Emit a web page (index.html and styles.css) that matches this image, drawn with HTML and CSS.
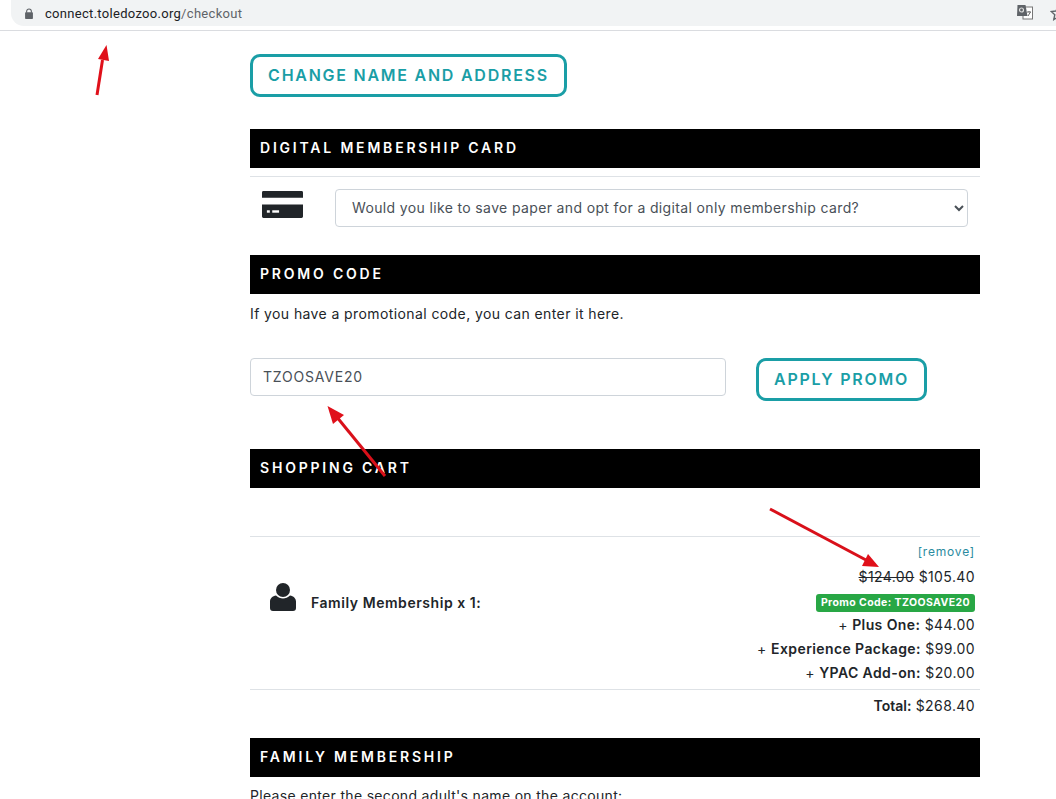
FILE: index.html
```html
<!DOCTYPE html>
<html lang="en">
<head>
    <meta charset="UTF-8">
    <meta name="viewport" content="width=device-width, initial-scale=1.0">
    <title>Checkout</title>
    <link rel="stylesheet" href="styles.css">
</head>
<body>
    <div class="browser-bar">
        <div class="address-pill">
            <svg class="lock-icon" width="10" height="11" viewBox="0 0 12 14">
                <path d="M3 6V4.200a3 3 0 0 1 6 0V6" fill="none" stroke="#5f6368" stroke-width="1.400"/>
                <rect x="1" y="5.500" width="10" height="8.500" rx="1" fill="#5f6368"/>
            </svg>
            <span class="url">connect.toledozoo.org<span class="url-path">/checkout</span></span>
        </div>
        <svg class="translate-icon" width="16" height="16" viewBox="0 0 16 16">
            <rect x="6" y="3" width="9.500" height="12" fill="#fff" stroke="#777" stroke-width="1"/>
            <path d="M0.500 1h8l2 11h-10.500z" fill="#5f6368"/>
            <circle cx="4.500" cy="6" r="2" fill="none" stroke="#ddd" stroke-width="1.200"/>
            <path d="M10 8h4M12 7v1M11 12l2.500-4" stroke="#666" stroke-width="1" fill="none"/>
        </svg>
        <svg class="star-icon" width="16" height="16" viewBox="0 0 16 16">
            <path d="M8 1.500l2 4.500 4.800.5-3.600 3.200 1 4.800L8 12l-4.200 2.500 1-4.800L1.200 6.500 6 6z" fill="none" stroke="#5f6368" stroke-width="1.400"/>
        </svg>
    </div>

    <div class="checkout">
        <a href="#" class="outline-button name-button">CHANGE NAME AND ADDRESS</a>

        <h2 class="section-title card-title">DIGITAL MEMBERSHIP CARD</h2>
        <div class="card-row">
            <svg class="card-icon" width="41" height="27" viewBox="0 0 42 28" preserveAspectRatio="none">
                <path d="M1.500 0h39a1.500 1.500 0 0 1 1.500 1.500V7H0V1.500A1.500 1.500 0 0 1 1.500 0z" fill="#212529"/>
                <path d="M0 14h42v12.500a1.500 1.500 0 0 1-1.500 1.500h-39A1.500 1.500 0 0 1 0 26.500z" fill="#212529"/>
                <rect x="5" y="20" width="3" height="2.500" fill="#fff"/>
                <rect x="10.500" y="20" width="7" height="2.500" fill="#fff"/>
            </svg>
            <select class="card-select">
                <option>Would you like to save paper and opt for a digital only membership card?</option>
            </select>
        </div>

        <h2 class="section-title promo-title">PROMO CODE</h2>
        <p class="promo-text">If you have a promotional code, you can enter it here.</p>
        <div class="promo-row">
            <input class="promo-input" type="text" value="TZOOSAVE20">
            <a href="#" class="outline-button apply-button">APPLY PROMO</a>
        </div>

        <h2 class="section-title cart-title">SHOPPING CART</h2>
        <div class="cart-item">
            <div class="cart-name">
                <svg class="person-icon" width="26" height="28" viewBox="0 0 26 28">
                    <circle cx="13" cy="7" r="7" fill="#212529"/>
                    <path d="M6 12.500c2 2 4.500 3 7 3s5-1 7-3c3.500.5 6 3 6 6V25a3 3 0 0 1-3 3H3a3 3 0 0 1-3-3v-6.500c0-3 2.500-5.500 6-6z" fill="#212529"/>
                </svg>
                <strong>Family Membership x 1:</strong>
            </div>
            <div class="cart-prices">
                <a href="#" class="remove-link">[remove]</a>
                <div class="price-line"><s>$124.00</s> $105.40</div>
                <div class="promo-line"><span class="promo-badge">Promo Code: TZOOSAVE20</span></div>
                <div class="price-line">+ <strong>Plus One:</strong> $44.00</div>
                <div class="price-line">+ <strong>Experience Package:</strong> $99.00</div>
                <div class="price-line">+ <strong>YPAC Add-on:</strong> $20.00</div>
            </div>
        </div>
        <div class="cart-total"><strong>Total:</strong> $268.40</div>

        <h2 class="section-title family-title">FAMILY MEMBERSHIP</h2>
        <p class="family-text">Please enter the second adult's name on the account:</p>
    </div>

    <!-- red arrows drawn over the screenshot -->
    <svg class="arrows" width="1056" height="799" viewBox="0 0 1056 799">
        <path d="M97 95L102.500 60" stroke="#e0101a" stroke-width="3" fill="none"/>
        <path d="M106.500 45L109 61L98 59z" fill="#e0101a"/>
        <path d="M385 476L336 416" stroke="#d9101a" stroke-width="3" fill="none"/>
        <path d="M327.500 406L344 415L333 424z" fill="#e0101a"/>
        <path d="M770 509L866 560" stroke="#d9101a" stroke-width="3" fill="none"/>
        <path d="M879 567L862 566L868 554z" fill="#e0101a"/>
    </svg>
</body>
</html>
```

FILE: styles.css
```css
html, body {
    height: 799px;
    overflow: hidden;
}

body {
    margin: 0;
    position: relative;
    background-color: #fff;
    color: #212529;
    font-family: Inter, "Open Sans", sans-serif;
    font-size: 14px;
    letter-spacing: 0.4px;
}

/* Browser chrome */
.browser-bar {
    display: flex;
    align-items: center;
    height: 30px;
    padding-left: 11px;
    background-color: #fff;
    border-bottom: 1px solid #dadce0;
}

.address-pill {
    display: flex;
    align-items: center;
    flex: 1;
    height: 26px;
    margin-top: -4px;
    padding-left: 13px;
    background-color: #f1f3f4;
    border-radius: 0 0 0 13px;
}

.lock-icon {
    margin-right: 11px;
}

.url {
    font-family: Roboto, sans-serif;
    font-size: 13px;
    letter-spacing: 0.3px;
    color: #202124;
}

.url-path {
    color: #5f6368;
}

.translate-icon {
    position: absolute;
    left: 1017px;
    top: 4px;
}

.star-icon {
    position: absolute;
    left: 1050px;
    top: 5px;
}

/* Page column */
.checkout {
    width: 730px;
    margin-left: 250px;
    padding-top: 23px;
}

.outline-button {
    display: inline-block;
    box-sizing: border-box;
    border: 3px solid #1a9ea6;
    border-radius: 10px;
    color: #1a9ea6;
    font-weight: 600;
    font-size: 16px;
    letter-spacing: 1.75px;
    text-align: center;
    text-decoration: none;
}

.name-button {
    width: 317px;
    height: 43px;
    line-height: 37px;
}

.section-title {
    height: 39px;
    margin: 0;
    padding-left: 10px;
    background-color: #000;
    color: #fff;
    font-size: 14px;
    font-weight: 600;
    letter-spacing: 2.8px;
    line-height: 38px;
}

.card-title {
    margin-top: 32px;
}

.card-row {
    display: flex;
    align-items: flex-start;
    margin-top: 8px;
    padding: 12px 12px 0 12px;
    height: 67px;
    box-sizing: border-box;
    border-top: 1px solid #dee2e6;
}

.card-icon {
    margin-top: 2px;
    flex: none;
}

.card-select {
    flex: 1;
    height: 38px;
    margin-left: 32px;
    padding: 0 12px 2px;
    background-color: #fff;
    border: 1px solid #ced4da;
    border-radius: 4px;
    color: #495057;
    font-family: Inter, sans-serif;
    font-size: 14px;
    letter-spacing: 0.36px;
}

.promo-title {
    margin-top: 12px;
}

.promo-text {
    margin: 11px 0 0;
    line-height: 17px;
}

.promo-row {
    display: flex;
    align-items: flex-start;
    margin-top: 36px;
}

.promo-input {
    width: 476px;
    height: 38px;
    box-sizing: border-box;
    padding: 0 12px 2px;
    border: 1px solid #ced4da;
    border-radius: 4px;
    color: #495057;
    font-family: Inter, sans-serif;
    font-size: 14px;
    letter-spacing: 0.8px;
}

.apply-button {
    width: 171px;
    height: 43px;
    margin-left: 30px;
    line-height: 37px;
}

.cart-title {
    margin-top: 48px;
}

.cart-item {
    display: flex;
    justify-content: space-between;
    height: 154px;
    box-sizing: border-box;
    margin-top: 48px;
    border-top: 1px solid #dee2e6;
    border-bottom: 1px solid #dee2e6;
    padding: 6px 5px 0 20px;
}

.cart-name {
    display: flex;
    align-items: center;
    height: 110px;
}

.cart-name strong {
    margin: 8px 0 0 15px;
    font-weight: 600;
    letter-spacing: 0.55px;
}

.person-icon {
    margin-top: -2px;
}

.cart-prices {
    text-align: right;
}

.remove-link {
    display: block;
    height: 22px;
    color: #2a8ba0;
    font-size: 12px;
    letter-spacing: 0.8px;
    line-height: 17px;
    text-decoration: none;
}

.price-line {
    height: 24px;
    line-height: 24px;
}

.price-line strong {
    font-weight: 600;
}

.promo-line {
    height: 24px;
}

.promo-badge {
    display: inline-block;
    height: 18px;
    margin-top: 5px;
    padding: 0 5px;
    background-color: #28a745;
    border-radius: 3px;
    color: #fff;
    font-size: 10.500px;
    font-weight: 700;
    line-height: 18px;
    vertical-align: top;
}

.cart-total {
    padding: 7px 5px 0 0;
    line-height: 17px;
    text-align: right;
}

.cart-total strong {
    font-weight: 600;
    letter-spacing: 0;
}

.family-title {
    margin-top: 24px;
}

.family-text {
    margin: 10px 0 0;
    letter-spacing: 0.32px;
    line-height: 17px;
}

/* Annotations */
.arrows {
    position: absolute;
    left: 0;
    top: 0;
}
```
